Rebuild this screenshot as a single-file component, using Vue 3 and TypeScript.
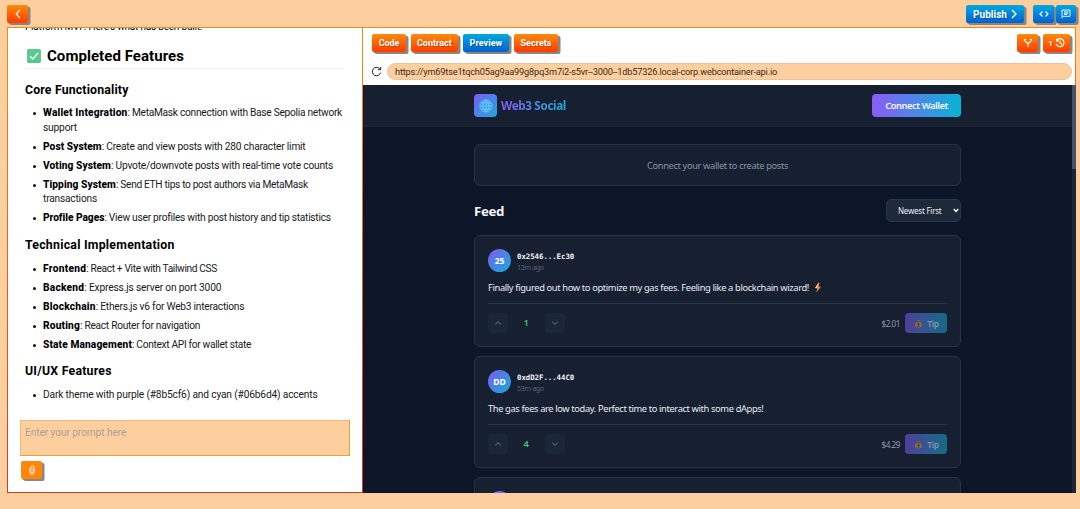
<script setup lang="ts">
import type { Directive } from 'vue'

// Spreads a run of text over the given advance width by adjusting its tracking.
const vFit: Directive<HTMLElement, number> = {
  mounted(el, { value }) {
    const count = (el.textContent ?? '').length
    const natural = el.getBoundingClientRect().width
    if (count > 0 && natural > 0) el.style.letterSpacing = `${(value - natural) / count}px`
  },
}

interface Item { label?: string; lw?: number; text: string; tw: number; more?: string; mw?: number }
interface Section { title: string; width: number; items: Item[] }
interface Post { initials?: string; address?: string; time?: string; body?: string; bw?: number; bolt?: boolean; score?: number; tips?: string }

const sections: Section[] = [
  {
    title: 'Core Functionality', width: 103.5,
    items: [
      { label: 'Wallet Integration', lw: 84.5, text: ': MetaMask connection with Base Sepolia network', tw: 214.5, more: 'support', mw: 34 },
      { label: 'Post System', lw: 58.7, text: ': Create and view posts with 280 character limit', tw: 203.8 },
      { label: 'Voting System', lw: 68, text: ': Upvote/downvote posts with real-time vote counts', tw: 222 },
      { label: 'Tipping System', lw: 73, text: ': Send ETH tips to post authors via MetaMask', tw: 191.8, more: 'transactions', mw: 54 },
      { label: 'Profile Pages', lw: 61.3, text: ': View user profiles with post history and tip statistics', tw: 226 },
    ],
  },
  {
    title: 'Technical Implementation', width: 149.7,
    items: [
      { label: 'Frontend', lw: 43.3, text: ': React + Vite with Tailwind CSS', tw: 130.7 },
      { label: 'Backend', lw: 41.3, text: ': Express.js server on port 3000', tw: 137 },
      { label: 'Blockchain', lw: 52.7, text: ': Ethers.js v6 for Web3 interactions', tw: 148.5 },
      { label: 'Routing', lw: 37, text: ': React Router for navigation', tw: 120 },
      { label: 'State Management', lw: 89, text: ': Context API for wallet state', tw: 119 },
    ],
  },
  {
    title: 'UI/UX Features', width: 86.8,
    items: [{ text: 'Dark theme with purple (#8b5cf6) and cyan (#06b6d4) accents', tw: 274.5 }],
  },
]

const tabs = [
  { name: 'Code', width: 34, tw: 20.5 },
  { name: 'Contract', width: 47.5, tw: 34.7 },
  { name: 'Preview', width: 46.5, tw: 32.7, active: true },
  { name: 'Secrets', width: 44.5, tw: 31 },
]

const posts: Post[] = [
  { initials: '25', address: '0x2546...Ec30', time: '12m ago', body: 'Finally figured out how to optimize my gas fees. Feeling like a blockchain wizard!', bw: 321, bolt: true, score: 1, tips: '$2.01' },
  { initials: 'DD', address: '0xdD2F...44C0', time: '53m ago', body: 'The gas fees are low today. Perfect time to interact with some dApps!', bw: 275.5, score: 4, tips: '$4.29' },
  {},
]
</script>

<template>
  <div class="window">
    <header class="topbar">
      <button class="key back" aria-label="Back">
        <svg width="6" height="10" viewBox="0 0 6 10"><path d="M4.8 1 1.2 5l3.6 4" /></svg>
      </button>
      <div class="top-actions">
        <button class="key blue publish">
          <span v-fit="34">Publish</span>
          <svg width="6" height="10" viewBox="0 0 6 10"><path d="M1 1l4 4-4 4" /></svg>
        </button>
        <button class="key blue code-toggle" aria-label="Code view">
          <svg width="10" height="8" viewBox="0 0 10 8"><path d="M3.5 1.5 1 4l2.5 2.5M6.5 1.5 9 4 6.5 6.5" /></svg>
        </button>
        <button class="key blue chat-toggle" aria-label="Chat view">
          <svg width="10" height="10" viewBox="0 0 10 10"><path d="M1 1h8v6.3H2.6L1 8.8zM3 2.9h4.3M3 4.2h4.3M3 5.5h3" /></svg>
        </button>
      </div>
    </header>

    <main class="panes">
      <section class="chat">
        <div class="log">
          <p class="intro"><span v-fit="177">Platform MVP. Here's what has been built:</span></p>
          <h2>
            <svg class="check" width="14" height="14" viewBox="0 0 14 14">
              <rect x=".3" y=".3" width="13.4" height="13.4" rx="1.2" fill="#35a86c" />
              <rect x="1" y=".8" width="12.2" height="12" rx=".8" fill="#56cd8e" />
              <path d="M3.2 7.2 5.8 9.9 11 4" fill="none" stroke="#fff" stroke-width="1.4" />
            </svg>
            <span v-fit="137">Completed Features</span>
          </h2>
          <template v-for="s in sections" :key="s.title">
            <h3><span v-fit="s.width">{{ s.title }}</span></h3>
            <ul>
              <li v-for="i in s.items" :key="i.text">
                <b v-if="i.label" v-fit="i.lw ?? 0">{{ i.label }}</b><span v-fit="i.tw">{{ i.text }}</span>
                <template v-if="i.more"><br><span v-fit="i.mw ?? 0">{{ i.more }}</span></template>
              </li>
            </ul>
          </template>
        </div>
        <div class="prompt"><span v-fit="101.3">Enter your prompt here</span></div>
        <button class="key attach" aria-label="Attach file">
          <svg width="8" height="10" viewBox="0 0 8 10"><path d="M5.1 2.8v4.1a1.1 1.1 0 0 1-2.2 0V2.5a1.7 1.7 0 0 1 3.4 0v4.6a2.3 2.3 0 0 1-4.6 0V3" /></svg>
        </button>
      </section>

      <section class="workspace">
        <div class="tools">
          <div class="tabs">
            <button v-for="t in tabs" :key="t.name" class="key" :class="{ blue: t.active }" :style="{ width: t.width + 'px' }">
              <span v-fit="t.tw">{{ t.name }}</span>
            </button>
          </div>
          <div class="history">
            <button class="key fork" aria-label="Fork">
              <svg width="10" height="10" viewBox="0 0 10 10"><path d="M5 9.3V5.7L2 3M5 5.7 8 3" /><path class="solid" d="M.8 3.6 1 .9 3.7 1zM9.2 3.6 9 .9 6.3 1z" /></svg>
            </button>
            <button class="key versions">
              <span>1</span>
              <svg width="10" height="10" viewBox="0 0 10 10"><path d="M1.7 2.3A4 4 0 1 1 1.1 5.8M1.5.7v2.2h2.3M5 2.8V5l1.8 1.5" /></svg>
            </button>
          </div>
        </div>
        <div class="address-row">
          <svg class="reload" width="11" height="11" viewBox="0 0 11 11"><path d="M9 3.2A4.2 4.2 0 1 0 9.6 6.6M9.7.9v2.8H7" /></svg>
          <div class="address"><span v-fit="382">https://ym69tse1tqch05ag9aa99g8pq3m7i2-s5vr--3000--1db57326.local-corp.webcontainer-api.io</span></div>
        </div>

        <div class="app">
          <div class="app-head">
            <div class="column">
              <div class="brand">
                <span class="logo">
                  <svg width="14" height="14" viewBox="0 0 14 14">
                    <circle cx="7" cy="7" r="6.2" fill="#35a5ec" />
                    <path d="M7 .8v12.4M.8 7h12.4M1.7 3.9h10.6M1.7 10.1h10.6M7 .8C2.9 4.2 2.9 9.8 7 13.2 11.1 9.8 11.1 4.2 7 .8" fill="none" stroke="#84cff8" stroke-width=".7" />
                    <circle cx="7" cy="7" r="6.2" fill="none" stroke="#6bc2f5" stroke-width=".7" />
                  </svg>
                </span>
                <span v-fit="65" class="brand-name">Web3 Social</span>
              </div>
              <button class="connect"><span v-fit="62.7">Connect Wallet</span></button>
            </div>
          </div>
          <div class="feed">
            <div class="notice"><span v-fit="141">Connect your wallet to create posts</span></div>
            <div class="feed-head">
              <h1><span v-fit="30">Feed</span></h1>
              <div class="sort"><span v-fit="43.5">Newest First</span>
                <svg width="6" height="5" viewBox="0 0 6 5"><path d="M.8 1 3 3.4 5.2 1" /></svg>
              </div>
            </div>
            <article v-for="(p, n) in posts" :key="n" class="post">
              <div class="author">
                <span class="avatar">{{ p.initials }}</span>
                <div v-if="p.address" class="meta">
                  <span class="hash"><span v-fit="57.2">{{ p.address }}</span></span>
                  <span class="time"><span v-fit="26.7">{{ p.time }}</span></span>
                </div>
              </div>
              <p v-if="p.body" class="body"><span v-fit="p.bw ?? 0">{{ p.body }}</span>
                <svg v-if="p.bolt" width="8" height="11" viewBox="0 0 8 11"><path d="M4.6.5 1 6l2.4.2L2.2 10.5 7 4.8 4.5 4.5 5.6 1z" fill="#f5874a" /><path d="M4.6.5 1 6l2.4.2.6-2z" fill="#ffc470" /></svg>
              </p>
              <div v-if="p.tips" class="actions">
                <span class="vote"><svg width="8" height="6" viewBox="0 0 8 6"><path d="m1.3 4.4 2.7-2.7 2.7 2.7" /></svg></span>
                <span class="score">{{ p.score }}</span>
                <span class="vote"><svg width="8" height="6" viewBox="0 0 8 6"><path d="m1.3 1.6 2.7 2.7 2.7-2.7" /></svg></span>
                <span class="tips"><span v-fit="18.5">{{ p.tips }}</span></span>
                <span class="tip">
                  <svg width="9" height="9" viewBox="0 0 9 9">
                    <path d="M3 .8 4.5 1.4 6 .6 5.6 2.5C7.5 3.6 8.4 5.2 8 6.8 7.7 8.1 6.6 8.5 4.5 8.5S1.3 8.1 1 6.8c-.4-1.6.6-3.2 2.4-4.3z" fill="#89683f" />
                    <path d="M3.2 2.5h2.6" stroke="#393b4d" stroke-width=".7" />
                    <path d="M4.5 3.9v3.7M5.3 4.5H4v1.1h1v1.2H3.7" fill="none" stroke="#35354b" stroke-width=".7" />
                  </svg>
                  <span v-fit="11.5">Tip</span>
                </span>
              </div>
            </article>
          </div>
          <div class="scrollbar"><i></i></div>
        </div>
      </section>
    </main>
  </div>
</template>

<style>
body { margin: 0; overflow: hidden; }
</style>

<style scoped>
* { box-sizing: border-box; }
.window { width: 1080px; height: 509px; overflow: hidden; background: #fecf9e; font-family: Roboto, "Noto Sans", sans-serif; color: #000; white-space: nowrap; }
.topbar { height: 27px; padding: 5px 4px 0 7px; display: flex; justify-content: space-between; align-items: flex-start; }
.top-actions { display: flex; }
svg { flex: none; display: block; }
button { font-family: inherit; border: 0; margin: 0; padding: 0; }
.key { height: 18px; display: flex; align-items: center; justify-content: center; border-radius: 2px; color: #fff; background: linear-gradient(#ff8a0a, #ff3b00); box-shadow: 1px 1px 0 #8a8580, 2.5px 2px 0 #8a8580; font-weight: 700; font-size: 9px; flex: none; text-shadow: 1px 1px 1px rgba(0, 0, 0, .25); }
.key.blue { background: linear-gradient(#00a9e2, #0560cf); }
.key svg path { fill: none; stroke: #fff; stroke-width: 1.15; }
.key svg .solid { fill: #fff; stroke: none; }
.back { width: 21px; }
.publish { width: 58px; gap: 4px; font-size: 10px; margin-right: 9px; }
.publish svg path { stroke-width: 1.4; }
.code-toggle { width: 21px; margin-right: 2px; }
.chat-toggle { width: 20px; }
.key.chat-toggle svg path { stroke-width: .9; }

.panes { display: flex; margin-left: 7px; width: 1069px; height: 466px; }
.chat { width: 356px; height: 466px; background: #fff; border: 1px solid; border-image: linear-gradient(#ee8a20, #d33b20) 1; display: flex; flex-direction: column; overflow: hidden; }
.log { height: 392px; padding: 0 18px 0 17px; overflow: hidden; flex: none; }
.intro { margin: -8px 0 0; font-size: 10px; line-height: 14px; height: 14px; }
h2 { margin: 8px 0 0 -1px; padding: 0 0 0 3px; height: 27px; border-bottom: 1px solid #f1eff0; display: flex; align-items: flex-start; gap: 6px; font-size: 15px; line-height: 28px; font-weight: 700; }
.check { margin-top: 7px; }
h3 { margin: 12.6px 0 8.8px; height: 16px; font-size: 12.3px; line-height: 16px; font-weight: 700; }
ul + h3 { margin-top: 11.2px; }
ul { list-style: none; margin: 0; padding: 0 0 0 18px; }
li { position: relative; font-size: 10.2px; line-height: 14.4px; margin-bottom: 4.6px; color: #171a20; }
li b { color: #000; font-weight: 800; }
li::before { content: ""; position: absolute; left: -10px; top: 6px; width: 3px; height: 3px; border-radius: 50%; background: #111; }
.prompt { width: 330px; height: 36px; margin-left: 12px; background: #fecf9e; border: 1px solid #f0a030; border-top-color: #efb878; border-left-color: #efb878; padding: 4px; font-size: 10px; line-height: 15px; color: #a9a09a; flex: none; }
.attach { width: 21px; margin: 5px 0 0 13px; background: #ff8608; }
.key.attach svg path { stroke-width: .8; }

.workspace { width: 713px; height: 466px; display: flex; flex-direction: column; background: #fff; border-top: 1px solid #ee8a20; overflow: hidden; }
.tools { height: 35px; padding: 6px 5px 0 9px; display: flex; justify-content: space-between; flex: none; border-right: 1px solid #ee7f20; }
.tabs, .history { display: flex; gap: 4px; }
.tabs { gap: 4.6px; }
.fork { width: 21px; }
.versions { width: 27px; gap: 2px; margin-left: 1px; font-size: 8px; }
.address-row { height: 22px; display: flex; align-items: flex-start; padding: 0 3px 0 8px; flex: none; border-right: 1px solid #ee6e20; }
.reload { margin: 3px 5px 0 0; }
.reload path { fill: none; stroke: #222; stroke-width: 1; }
.address { flex: 1; height: 17px; border: 1px solid #e9c39b; border-radius: 9px; background: #fecf9e; padding-left: 7px; font-size: 9.2px; line-height: 16px; color: #3b2a1c; }

.app { position: relative; height: 408px; flex: none; background: #0d1628; overflow: hidden; font-family: "Noto Sans", sans-serif; color: #e8edf4; }
.app-head { height: 42px; background: #162031; border-bottom: 1px solid #1a2537; }
.column { width: 487px; margin-left: 111px; padding-top: 9px; display: flex; justify-content: space-between; }
.brand { display: flex; align-items: center; gap: 4px; }
.logo { width: 23px; height: 23px; border-radius: 4px; display: grid; place-items: center; background: linear-gradient(135deg, #7c5df2, #1fa9dc); }
.brand-name { font-size: 11.7px; line-height: 23px; font-weight: 700; background: linear-gradient(90deg, #8b5cf6, #19b2d8); background-clip: text; color: transparent; }
.connect { width: 89px; height: 23px; border-radius: 4px; background: linear-gradient(90deg, #8b5cf6, #08b4d6); color: #f4f6fb; font-size: 9.3px; font-weight: 600; line-height: 23px; }
.feed { width: 487px; margin: 17px 0 0 111px; }
.notice { height: 42px; border: 1px solid #263347; border-radius: 6px; background: #162031; display: grid; place-items: center; font-size: 9.3px; color: #8793a5; }
.feed-head { display: flex; justify-content: space-between; align-items: center; height: 23px; margin: 13px 0; }
h1 { margin: 1px 0 0; font-size: 13.2px; line-height: 23px; font-weight: 700; color: #f8fafc; }
.sort { width: 75px; height: 23px; border: 1px solid #28354a; border-radius: 5px; background: #1e293a; display: flex; align-items: center; justify-content: space-between; padding: 0 1px 0 11px; font-size: 8px; }
.sort svg path { fill: none; stroke: #fff; stroke-width: 1.4; }
.post { height: 112px; margin-bottom: 9px; border: 1px solid #263347; border-radius: 6px; background: #162031; padding: 13px; }
.author { display: flex; gap: 6px; }
.avatar { width: 23px; height: 23px; border-radius: 50%; background: linear-gradient(135deg, #8059f3, #10afd8); color: #fff; font-size: 8.5px; font-weight: 700; line-height: 23px; text-align: center; }
.meta { display: flex; flex-direction: column; }
.hash { height: 14px; line-height: 16px; font-family: "DejaVu Sans Mono", monospace; font-weight: 700; font-size: 7.4px; color: #eef2f8; }
.time { height: 9px; line-height: 9px; font-size: 7.2px; color: #566274; }
.body { display: flex; align-items: center; gap: 5px; height: 15px; margin: 8px 0; font-size: 9.3px; line-height: 15px; }
.actions { border-top: 1px solid #2b384b; padding-top: 9px; display: flex; align-items: center; }
.vote { width: 20px; height: 20px; border-radius: 4px; background: #1b2637; display: grid; place-items: center; }
.vote svg path { fill: none; stroke: #505c6e; stroke-width: 1.2; }
.score { width: 36.5px; text-align: center; font-size: 9.3px; font-weight: 600; line-height: 20px; color: #43c677; }
.tips { margin-left: auto; font-size: 8.2px; color: #8d99ab; }
.tip { width: 42px; height: 20px; margin-left: 5px; border-radius: 4px; background: linear-gradient(90deg, #50409a, #146b87); display: flex; align-items: center; justify-content: center; gap: 4px; font-size: 8.4px; font-weight: 600; color: #8993aa; padding-left: 1px; }
.scrollbar { position: absolute; right: 0; top: 0; width: 4px; height: 408px; background: #1b2636; }
.scrollbar i { display: block; height: 84px; background: #465366; }
</style>
